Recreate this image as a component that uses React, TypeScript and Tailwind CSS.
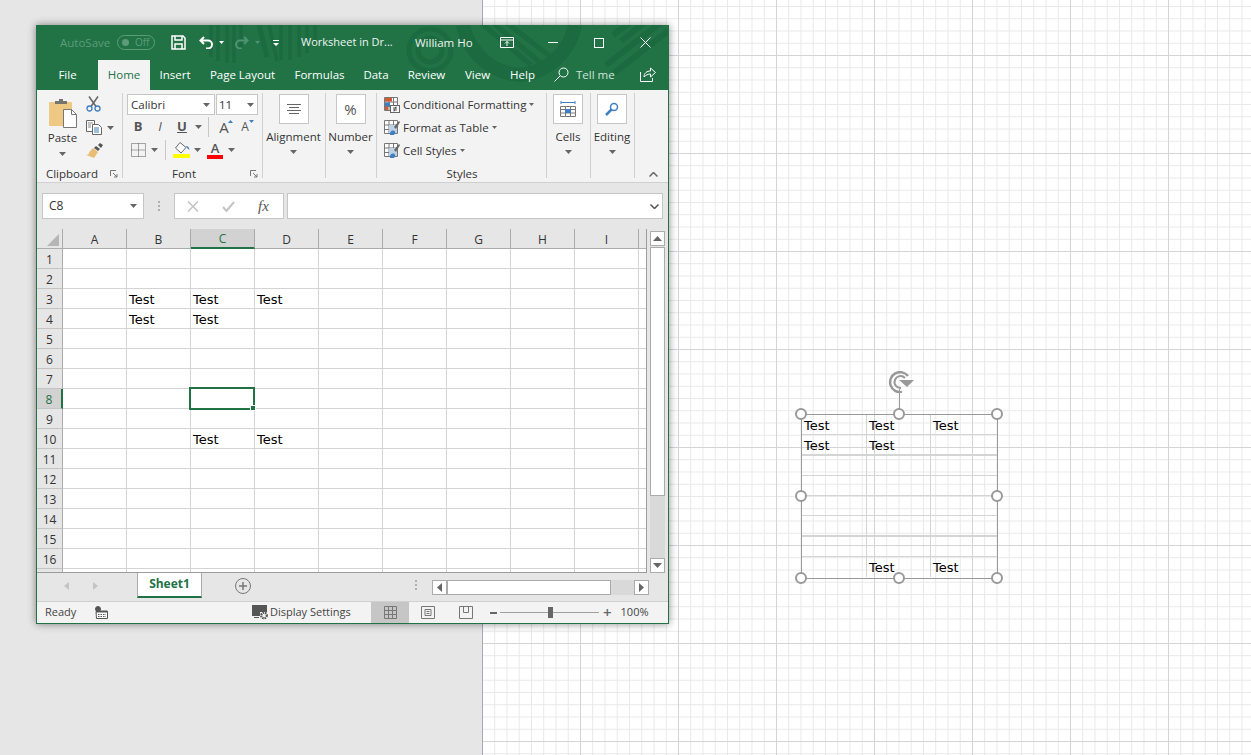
const uiFont = "font-['Open_Sans','Noto_Sans',sans-serif]";
const cellFont = "font-['DejaVu_Sans',sans-serif]";

const columns = ['A', 'B', 'C', 'D', 'E', 'F', 'G', 'H', 'I', ''];
const rows = Array.from({ length: 17 }, (_, i) => i + 1);
const values: Record<string, string> = {
  B3: 'Test',
  C3: 'Test',
  D3: 'Test',
  B4: 'Test',
  C4: 'Test',
  C10: 'Test',
  D10: 'Test',
};

const Caret = ({ className = '' }: { className?: string }) => (
  <svg width="7" height="4" viewBox="0 0 7 4" className={className}>
    <path d="M0 0h7L3.5 4z" fill="#666" />
  </svg>
);

const TitleArt = () => (
  <svg width="631" height="65" viewBox="0 0 631 65" className="absolute left-0 top-0" fill="none" stroke="#1c6a3f">
    <path d="M174 0v32M181 0v36M190 0v38M197 0v38M204 0v24M232 0l8 36M244 0v35M253 0v35M262 0v32M270 0v28M278 0v22" strokeWidth="3.5" />
    <path d="M222 0l8 32" strokeWidth="5" />
    <circle cx="393" cy="25" r="12" strokeWidth="5" />
    <circle cx="393" cy="25" r="21" strokeWidth="5" />
    <path d="M426 0a62 62 0 0 0 58 50a62 62 0 0 0 54-50" strokeWidth="14" />
    <path d="M444 -2l50 42M456 -2l50 42M470 -2l44 34" strokeWidth="5" />
    <path d="M631 6l-54 42M631 -8l-62 48M612 -6l-28 22M598 -6l-22 16" strokeWidth="6" />
  </svg>
);

const TitleBar = () => (
  <div className="relative z-10 flex h-[35px] items-center text-[11.5px] text-white">
    <span className="ml-[23px] w-[57px] text-[#5d9c79]">AutoSave</span>
    <span className="flex h-[15px] w-[38px] items-center rounded-full border border-[#5d9c79] pl-[4px] text-[10px] text-[#5d9c79]">
      <span className="mr-[6px] h-[7px] w-[7px] rounded-full bg-[#5d9c79]" />
      Off
    </span>
    <svg width="15" height="15" viewBox="0 0 15 15" className="ml-[16px]" fill="none" stroke="#fff">
      <path d="M1 1h11l2 2v11H1z" strokeWidth="1.5" />
      <path d="M4 1v4h7V1M4 14V9h7v5" strokeWidth="1.5" />
    </svg>
    <svg width="15" height="13" viewBox="0 0 15 13" className="ml-[13px]" fill="none" stroke="#fff" strokeWidth="2">
      <path d="M5 1L1.5 4.5 5 8M2 4.5h7a4 4 0 0 1 0 8H7" />
    </svg>
    <svg width="5" height="3" viewBox="0 0 5 3" className="ml-[5px]">
      <path d="M0 0h5L2.500 3z" fill="#fff" />
    </svg>
    <svg width="15" height="13" viewBox="0 0 15 13" className="ml-[10px]" fill="none" stroke="#4f9370" strokeWidth="2">
      <path d="M10 1l3.500 3.500L10 8M13 4.500H6a4 4 0 0 0 0 8h2" />
    </svg>
    <svg width="5" height="3" viewBox="0 0 5 3" className="ml-[6px]">
      <path d="M0 0h5L2.500 3z" fill="#4f9370" />
    </svg>
    <svg width="6" height="6" viewBox="0 0 6 6" className="ml-[13px]" fill="#fff">
      <path d="M0 0h6v1H0zM0 3h6L3 6z" />
    </svg>
    <span className="ml-[22px] w-[114px] text-[11px] text-[#eef5f1]">Worksheet in Dr...</span>
    <span className="w-[85px] text-[#eef5f1]">William Ho</span>
    <svg width="14" height="11" viewBox="0 0 14 11" fill="none" stroke="#fff">
      <path d="M.5.5h13v10H.5zM.5 3h13M7 9V4.500M5 6.500l2-2 2 2" />
    </svg>
    <span className="ml-[34px] h-px w-[10px] bg-white" />
    <span className="ml-[36px] h-[10px] w-[10px] border border-white" />
    <svg width="11" height="11" viewBox="0 0 11 11" className="ml-[36px]" stroke="#fff">
      <path d="M.5.5l10 10M10.500.5l-10 10" />
    </svg>
  </div>
);

const tabs = [
  { label: 'File', width: 'w-[61px]' },
  { label: 'Home', width: 'w-[52px]', active: true },
  { label: 'Insert', width: 'w-[50px]' },
  { label: 'Page Layout', width: 'w-[85px]' },
  { label: 'Formulas', width: 'w-[69px]' },
  { label: 'Data', width: 'w-[44px]' },
  { label: 'Review', width: 'w-[57px]' },
  { label: 'View', width: 'w-[45px]' },
  { label: 'Help', width: 'w-[45px]' },
];

const TabRow = () => (
  <div className="relative z-10 flex h-[30px] items-stretch text-[11.5px] text-white">
    {tabs.map((tab) => (
      <span
        key={tab.label}
        className={`flex items-center justify-center ${tab.width} ${tab.active ? 'bg-[#f3f3f3] text-[#217346]' : ''}`}
      >
        {tab.label}
      </span>
    ))}
    <svg width="15" height="15" viewBox="0 0 15 15" className="ml-[9px] mt-[7px]" fill="none" stroke="#fff">
      <circle cx="9.500" cy="5.500" r="4.500" />
      <path d="M6 9l-5.500 5.500" />
    </svg>
    <span className="ml-[7px] flex items-center text-[#cfe3d8]">Tell me</span>
    <svg width="16" height="15" viewBox="0 0 16 15" className="ml-[25px] mt-[7px]" fill="none" stroke="#fff">
      <path d="M.5 5v9.500h12V11M4 10c0-4 3-6 6.500-6V1l5 4.500-5 4.500V7C8 7 6 8 4 10z" />
    </svg>
  </div>
);

const Launcher = () => (
  <svg width="8" height="8" viewBox="0 0 8 8" fill="none" stroke="#777" className="block">
    <path d="M.5 6V.5H6M3 3l4 4M7 4v3H4" />
  </svg>
);

const Group = ({
  width,
  label,
  labelPad = '',
  launcher,
  children,
}: {
  width: string;
  label: string;
  labelPad?: string;
  launcher?: boolean;
  children: React.ReactNode;
}) => (
  <div className={`relative flex h-[91px] flex-col ${width}`}>
    <span className="absolute right-0 top-[3px] h-[85px] w-px bg-[#d0d0d0]" />
    <div className="h-[77px]">{children}</div>
    <div className={`relative flex h-[14px] items-center justify-center text-[11.5px] leading-none text-[#333] ${labelPad}`}>
      {label}
      {launcher && (
        <span className="absolute right-[5px] top-[3px]">
          <Launcher />
        </span>
      )}
    </div>
  </div>
);

const PasteIcon = () => (
  <svg width="30" height="30" viewBox="0 0 30 30">
    <rect x="1" y="4" width="23" height="24" rx="1" fill="#efc883" />
    <path d="M7 6V3h4V1h4v2h4v3z" fill="#77736d" />
    <path d="M15.500 11.500h8l5 5v13h-13z" fill="#fff" stroke="#777" />
    <path d="M23.500 11.500v5h5" fill="none" stroke="#777" />
  </svg>
);

const ScissorsIcon = () => (
  <svg width="15" height="16" viewBox="0 0 15 16" fill="none">
    <path d="M3 .5l7 10M12 .5l-7 10" stroke="#666" strokeWidth="1.500" />
    <circle cx="3.500" cy="12.500" r="2.500" stroke="#3f7fbf" strokeWidth="1.300" />
    <circle cx="11.500" cy="12.500" r="2.500" stroke="#3f7fbf" strokeWidth="1.300" />
  </svg>
);

const CopyIcon = () => (
  <svg width="16" height="15" viewBox="0 0 16 15" fill="#fff" stroke="#666">
    <path d="M.5.500h8v11h-8z" />
    <path d="M6.500 4.500h6l3 3v7h-9z" />
    <path d="M8 8h5M8 10h5M8 12h5" stroke="#3f7fbf" />
    <path d="M2 3h5M2 5h3M2 7h3" stroke="#888" />
  </svg>
);

const PainterIcon = () => (
  <svg width="17" height="15" viewBox="0 0 17 15">
    <path d="M10 3l4 3-2 2-4-3z" fill="#555" />
    <path d="M12 2l2-2 3 2-2 3z" fill="#555" />
    <path d="M7 5l5 4-4 6-8-3c2 0 3-1 3-2s2-3 4-5z" fill="#e9bd75" />
  </svg>
);

const FontIcons = () => (
  <div className="pl-[4px] pt-[4px]">
    <div className="flex h-[21px] items-stretch text-[11.5px] text-[#333]">
      <div className="mr-px flex w-[88px] items-center justify-between border border-[#c6c6c6] bg-white pl-[3px] pr-[4px]">
        Calibri
        <Caret />
      </div>
      <div className="flex w-[42px] items-center justify-between border border-[#c6c6c6] bg-white pl-[2px] pr-[3px]">
        11
        <Caret />
      </div>
    </div>
    <div className="mt-px flex h-[22px] items-center text-[#555]">
      <span className="ml-[5px] w-[12px] text-center text-[13px] font-bold">B</span>
      <span className="ml-[10px] w-[12px] text-center text-[13px] italic">I</span>
      <span className="ml-[10px] w-[12px] text-center text-[13px] font-bold underline">U</span>
      <Caret className="ml-[7px]" />
      <span className="ml-[6px] h-[20px] w-px bg-[#c8c8c8]" />
      <span className="relative ml-[8px] w-[14px] text-center text-[15px] leading-none">
        A
        <svg width="5" height="3" viewBox="0 0 5 3" className="absolute -right-[2px] top-0">
          <path d="M2.500 0L5 3H0z" fill="#3f7fbf" />
        </svg>
      </span>
      <span className="relative ml-[8px] w-[12px] text-center text-[12px] leading-none">
        A
        <svg width="5" height="3" viewBox="0 0 5 3" className="absolute -right-[3px] -top-[1px]">
          <path d="M0 0h5L2.500 3z" fill="#3f7fbf" />
        </svg>
      </span>
    </div>
    <div className="mt-[2px] flex h-[20px] items-center">
      <svg width="15" height="14" viewBox="0 0 15 14" className="ml-[4px]" fill="none" stroke="#555" strokeDasharray="1 1">
        <path d="M.5.500h14v13H.5zM.5 7h14M7.500.500v13" />
      </svg>
      <Caret className="ml-[5px]" />
      <span className="ml-[7px] h-[20px] w-px bg-[#c8c8c8]" />
      <span className="ml-[7px] flex w-[17px] flex-col items-center">
        <svg width="16" height="12" viewBox="0 0 16 12" fill="#fff" stroke="#666">
          <path d="M6 .5l6 5-5 5.500L1.500 6z" />
          <path d="M12 4c2 0 3 1 3.500 4L13 6z" fill="#3f7fbf" stroke="none" />
        </svg>
        <span className="h-[4px] w-[17px] bg-[#ffff00]" />
      </span>
      <Caret className="ml-[4px]" />
      <span className="ml-[6px] flex w-[16px] flex-col items-center text-[13px] font-semibold leading-[13px] text-[#555]">
        A
        <span className="h-[4px] w-[16px] bg-[#ff0000]" />
      </span>
      <Caret className="ml-[5px]" />
    </div>
  </div>
);

const BigButton = ({ label, children }: { label: string; children: React.ReactNode }) => (
  <div className="flex flex-col items-center pr-[2px] pt-[4px] text-[11.5px] text-[#333]">
    <span className="flex h-[30px] w-[30px] items-center justify-center border border-[#c6c6c6] bg-white">
      {children}
    </span>
    <span className="mt-[4px] whitespace-nowrap leading-[18px]">{label}</span>
    <Caret className="mt-[4px]" />
  </div>
);

const StyleIcon = ({ variant }: { variant: 'conditional' | 'table' }) => (
  <svg width="16" height="16" viewBox="0 0 16 16" fill="none">
    <path d="M.5.500h13v13H.5zM.5 5h13M.5 9.500h13M5 .500v13M9.500.500v13" stroke="#777" fill="#fff" />
    {variant === 'conditional' ? (
      <>
        <rect x="1" y="1" width="7" height="3.500" fill="#d25b34" />
        <rect x="1" y="5.500" width="5" height="3.500" fill="#3f7fbf" />
        <rect x="1" y="10" width="3" height="3" fill="#d25b34" />
        <rect x="6.500" y="8.500" width="9" height="7" fill="#fff" stroke="#666" />
        <path d="M9 11h4M9 13h4M10 14.500l2-5" stroke="#555" />
      </>
    ) : (
      <>
        <rect x="5" y="5" width="8" height="8" fill="#bcd0e6" />
        <path d="M10 7l5-6 1 1-4 7z" fill="#666" />
        <path d="M6 14c0-2 1-3.500 3-3.500s2.500 2 2 3l-1 1.500H6z" fill="#3f7fbf" />
      </>
    )}
  </svg>
);

const StyleRow = ({ variant, label }: { variant: 'conditional' | 'table'; label: string }) => (
  <div className="flex h-[23px] items-center text-[11.5px] text-[#333]">
    <StyleIcon variant={variant} />
    <span className="ml-[3px]">{label}</span>
    <svg width="5" height="3" viewBox="0 0 5 3" className="ml-[3px]">
      <path d="M0 0h5L2.500 3z" fill="#666" />
    </svg>
  </div>
);

const Ribbon = () => (
  <div className="flex h-[93px] border-b border-[#d0d0d0] bg-[#f3f3f3] pl-[1px]">
    <Group width="w-[85px]" label="Clipboard" labelPad="pr-[17px]" launcher>
      <div className="flex">
        <div className="flex w-[48px] flex-col items-center pl-px pt-[8px] text-[11.5px] text-[#333]">
          <PasteIcon />
          <span className="mt-[1px] leading-[18px]">Paste</span>
          <Caret className="mt-[5px]" />
        </div>
        <div className="flex flex-col pt-[6px]">
          <ScissorsIcon />
          <div className="mt-[8px] flex items-center">
            <CopyIcon />
            <Caret className="ml-[5px]" />
          </div>
          <div className="mt-[8px]">
            <PainterIcon />
          </div>
        </div>
      </div>
    </Group>
    <Group width="w-[140px]" label="Font" labelPad="pr-[18px]" launcher>
      <FontIcons />
    </Group>
    <Group width="w-[63px]" label="">
      <BigButton label="Alignment">
        <svg width="14" height="11" viewBox="0 0 14 11" stroke="#666">
          <path d="M0 .5h14M2 3.500h10M0 6.500h14M2 9.500h10" />
        </svg>
      </BigButton>
    </Group>
    <Group width="w-[51px]" label="">
      <BigButton label="Number">
        <span className="text-[15px] text-[#555]">%</span>
      </BigButton>
    </Group>
    <Group width="w-[170px]" label="Styles">
      <div className="pl-[7px] pt-[3px]">
        <StyleRow variant="conditional" label="Conditional Formatting" />
        <StyleRow variant="table" label="Format as Table" />
        <StyleRow variant="table" label="Cell Styles" />
      </div>
    </Group>
    <Group width="w-[44px]" label="">
      <BigButton label="Cells">
        <svg width="16" height="17" viewBox="0 0 16 17" fill="none">
          <path d="M1 1.500h14M1 0v3M15 0v3" stroke="#3f7fbf" />
          <path d="M.5 5.500h15v10H.5zM.5 8.500h15M.5 12h15M5.500 5.500v10M10.500 5.500v10" stroke="#777" />
          <rect x="5" y="8" width="6" height="4" fill="#3f7fbf" />
        </svg>
      </BigButton>
    </Group>
    <Group width="w-[44px]" label="">
      <BigButton label="Editing">
        <svg width="14" height="14" viewBox="0 0 14 14" fill="none" stroke="#3f7fbf">
          <circle cx="9" cy="5" r="3.500" strokeWidth="1.500" />
          <path d="M6.500 7.500L1 13" strokeWidth="2.500" />
        </svg>
      </BigButton>
    </Group>
    <div className="flex flex-1 items-end justify-end pb-[5px] pr-[10px]">
      <svg width="9" height="5" viewBox="0 0 9 5" fill="none" stroke="#666" strokeWidth="1.500">
        <path d="M.5 4.500l4-4 4 4" />
      </svg>
    </div>
  </div>
);

const FormulaBar = () => (
  <div className="flex h-[46px] items-start bg-[#e6e6e6] pl-[5px] pt-[10px]">
    <div className="flex h-[26px] w-[102px] items-center justify-between border border-[#c6c6c6] bg-white pl-[6px] pr-[6px] text-xs text-[#333]">
      C8
      <Caret />
    </div>
    <span className="ml-[13px] mt-[8px] flex w-[4px] flex-col items-center gap-[2px]">
      <i className="h-[2px] w-[2px] bg-[#b0b0b0]" />
      <i className="h-[2px] w-[2px] bg-[#b0b0b0]" />
      <i className="h-[2px] w-[2px] bg-[#b0b0b0]" />
    </span>
    <div className="ml-[13px] flex h-[26px] w-[110px] items-center border border-[#c6c6c6] bg-white">
      <svg width="12" height="11" viewBox="0 0 12 11" className="ml-[12px]" stroke="#c4c4c4" strokeWidth="1.500">
        <path d="M1 .5l10 10M11 .5l-10 10" />
      </svg>
      <svg width="13" height="11" viewBox="0 0 13 11" className="ml-[23px]" fill="none" stroke="#c4c4c4" strokeWidth="2">
        <path d="M1 6l3.500 4L12 1" />
      </svg>
      <span className="ml-[23px] font-['Liberation_Serif',serif] text-[15px] italic text-[#555]">fx</span>
    </div>
    <div className="ml-[3px] flex h-[26px] w-[376px] items-center justify-end border border-[#c6c6c6] bg-white pr-[3px]">
      <svg width="9" height="5" viewBox="0 0 9 5" fill="none" stroke="#555" strokeWidth="1.500">
        <path d="M.5.500l4 4 4-4" />
      </svg>
    </div>
  </div>
);

const SheetGrid = () => (
  <div className={`relative h-[344px] w-[610px] overflow-hidden border-b border-r border-[#9c9c9c] bg-white ${uiFont}`}>
    <div className="grid grid-cols-[26px_repeat(10,64px)] grid-rows-[20px_repeat(17,20px)]">
      <div className="relative border-b border-r border-[#ababab] bg-[#e6e6e6]">
        <svg width="12" height="12" viewBox="0 0 12 12" className="absolute bottom-[2px] right-[3px]">
          <path d="M12 0v12H0z" fill="#b5b5b5" />
        </svg>
      </div>
      {columns.map((col) => (
        <div
          key={col || 'J'}
          className={`flex items-center justify-center border-r border-[#ababab] pt-[2px] text-xs ${
            col === 'C'
              ? 'border-b-2 border-b-[#217346] bg-[#d2d2d2] text-[#217346]'
              : 'border-b border-b-[#ababab] bg-[#e6e6e6] text-[#333]'
          }`}
        >
          {col}
        </div>
      ))}
      {rows.map((row) => (
        <div key={row} className="contents">
          <div
            className={`flex items-center justify-center border-b border-[#c4c4c4] pt-[2px] text-xs ${
              row === 8
                ? 'border-r-2 border-r-[#217346] bg-[#d2d2d2] text-[#217346]'
                : 'border-r border-r-[#ababab] bg-[#e6e6e6] text-[#333]'
            }`}
          >
            {/* row 17 only shows its top edge, no number visible */}
            {row < 17 ? row : ''}
          </div>
          {columns.map((col) => (
            <div
              key={col || 'J'}
              className={`flex items-center overflow-hidden border-b border-r border-[#d4d4d4] pl-[2px] pt-[2px] text-[13px] text-black ${cellFont}`}
            >
              {values[`${col}${row}`]}
            </div>
          ))}
        </div>
      ))}
    </div>
    {/* active cell C8 */}
    <div className="absolute left-[152px] top-[158px] h-[23px] w-[66px] border-2 border-[#217346]">
      <span className="absolute -bottom-[3px] -right-[3px] h-[6px] w-[6px] border border-white bg-[#217346]" />
    </div>
  </div>
);

const ScrollButton = ({ dir }: { dir: 'up' | 'down' | 'left' | 'right' }) => (
  <span className="flex h-[15px] w-[15px] shrink-0 items-center justify-center border border-[#ababab] bg-white">
    <svg width="9" height="9" viewBox="0 0 9 9" fill="#666">
      {dir === 'up' && <path d="M4.500 2L9 7H0z" />}
      {dir === 'down' && <path d="M0 2h9L4.500 7z" />}
      {dir === 'left' && <path d="M7 0v9L2 4.500z" />}
      {dir === 'right' && <path d="M2 0v9l5-4.500z" />}
    </svg>
  </span>
);

const VerticalScroll = () => (
  <div className="flex flex-1 flex-col bg-[#e6e6e6] pl-[3px] pr-[3px] pt-[2px]">
    <ScrollButton dir="up" />
    <div className="mt-px flex w-[15px] flex-1 flex-col bg-[#d9d9d9]">
      <div className="h-[249px] border border-[#ababab] bg-white" />
    </div>
    <ScrollButton dir="down" />
  </div>
);

const SheetTabs = () => (
  <div className="flex h-[28px] items-start bg-[#e6e6e6] text-xs">
    <svg width="5" height="8" viewBox="0 0 5 8" className="ml-[27px] mt-[9px]" fill="#c4c4c4">
      <path d="M5 0v8L0 4z" />
    </svg>
    <svg width="5" height="8" viewBox="0 0 5 8" className="ml-[24px] mt-[9px]" fill="#c4c4c4">
      <path d="M0 0v8l5-4z" />
    </svg>
    <div className="-mt-px ml-[39px] flex h-[26px] w-[65px] items-center justify-center border-x border-b-2 border-x-[#ababab] border-b-[#217346] bg-white font-bold text-[#217346]">
      Sheet1
    </div>
    <svg width="16" height="16" viewBox="0 0 16 16" className="ml-[33px] mt-[5px]" fill="none" stroke="#777">
      <circle cx="8" cy="8" r="7.500" />
      <path d="M8 4v8M4 8h8" strokeWidth="1.500" />
    </svg>
    <span className="ml-[164px] mt-[7px] flex w-[2px] flex-col gap-[2px]">
      <i className="h-[2px] w-[2px] bg-[#b0b0b0]" />
      <i className="h-[2px] w-[2px] bg-[#b0b0b0]" />
      <i className="h-[2px] w-[2px] bg-[#b0b0b0]" />
    </span>
    <div className="ml-[15px] mt-[7px] flex w-[217px] bg-[#d9d9d9]">
      <ScrollButton dir="left" />
      <span className="h-[15px] w-[164px] border border-[#ababab] bg-white" />
      <span className="flex-1" />
      <ScrollButton dir="right" />
    </div>
  </div>
);

const StatusBar = () => (
  <div className="flex h-[22px] items-center border-t border-[#d0d0d0] bg-[#f3f3f3] text-[11px] text-[#444]">
    <span className="ml-[8px] w-[50px]">Ready</span>
    <svg width="13" height="13" viewBox="0 0 13 13" fill="none" stroke="#555">
      <circle cx="3" cy="3" r="2.500" fill="#555" />
      <path d="M1 5.500h11.500v7H1.500z" fill="#fff" />
      <path d="M1 5.500h11.500" strokeWidth="2" />
      <path d="M3 8.500h8M3 10.500h8" strokeDasharray="1.500 1" />
    </svg>
    <svg width="17" height="15" viewBox="0 0 17 15" className="ml-[144px]" fill="#555">
      <path d="M0 0h15v7H8v4H0zM2 12h5v1H2z" />
      <circle cx="12" cy="10.500" r="2.800" fill="none" stroke="#555" strokeWidth="2.200" strokeDasharray="1.500 .8" />
    </svg>
    <span className="ml-[1px] w-[101px]">Display Settings</span>
    <span className="flex h-full w-[38px] items-center justify-center bg-[#c6c6c6]">
      <svg width="13" height="13" viewBox="0 0 13 13" fill="none" stroke="#777">
        <path d="M.5.500h12v12H.5zM.5 4.500h12M.5 8.500h12M4.500.500v12M8.500.500v12" />
      </svg>
    </span>
    <svg width="14" height="13" viewBox="0 0 14 13" className="ml-[12px]" fill="none" stroke="#777">
      <path d="M.5.500h13v12H.5zM4 3.500h6v6H4zM5.500 5.500h3M5.500 7.500h3" />
    </svg>
    <svg width="14" height="13" viewBox="0 0 14 13" className="ml-[24px]" fill="none" stroke="#777">
      <path d="M.5.500h13v12H.5zM4.500.500v6h5V.500" />
    </svg>
    <span className="ml-[17px] h-[2px] w-[7px] bg-[#666]" />
    <span className="relative ml-[3px] h-px w-[99px] bg-[#a0a0a0]">
      <span className="absolute left-[48px] -top-[5px] h-[11px] w-[5px] bg-[#666]" />
    </span>
    <span className="ml-[4px] text-[15px] font-semibold leading-none text-[#666]">+</span>
    <span className="ml-[9px]">100%</span>
  </div>
);

const ExcelWindow = () => (
  <div className={`absolute left-[36px] top-[25px] flex h-[599px] w-[633px] flex-col border-x border-b border-[#217346] bg-[#e6e6e6] shadow-[0_0_8px_rgba(0,0,0,0.45)] ${uiFont}`}>
    <div className="relative bg-[#217346]">
      <TitleArt />
      <TitleBar />
      <TabRow />
    </div>
    <Ribbon />
    <FormulaBar />
    <div className="flex">
      <SheetGrid />
      <VerticalScroll />
    </div>
    <SheetTabs />
    <StatusBar />
  </div>
);

const tableRows = [
  ['Test', 'Test', 'Test'],
  ['Test', 'Test', ''],
  ['', '', ''],
  ['', '', ''],
  ['', '', ''],
  ['', '', ''],
  ['', '', ''],
  ['', 'Test', 'Test'],
];

// handles sit on the frame corners and edge middles
const handles = [
  'left-[-7px] top-[-7px]',
  'left-[91px] top-[-7px]',
  'left-[189px] top-[-7px]',
  'left-[-7px] top-[75px]',
  'left-[189px] top-[75px]',
  'left-[-7px] top-[157px]',
  'left-[91px] top-[157px]',
  'left-[189px] top-[157px]',
];

const EmbeddedTable = () => (
  <div className={`absolute left-[801px] top-[414px] h-[165px] w-[197px] border border-[#999] ${cellFont}`}>
    <div className="grid h-[162px] grid-cols-[65px_64px_66px] grid-rows-[repeat(8,20.3px)]">
      {tableRows.map((row, r) =>
        row.map((text, c) => (
          <div
            key={`${r}-${c}`}
            className={`flex items-center pl-[2px] text-[13px] text-black ${r === 7 ? 'pt-px' : 'pt-[2px]'} ${c < 2 ? 'border-r border-r-[#d4d4d4]' : ''} ${
              r === 7 ? '' : r === 1 || r === 5 ? 'border-b-2 border-b-[#d4d4d4]' : 'border-b border-b-[#d4d4d4]'
            }`}
          >
            {text}
          </div>
        )),
      )}
    </div>
    <span className="absolute left-[97px] top-[-26px] h-[26px] w-px bg-[#999]" />
    <svg width="26" height="22" viewBox="0 0 26 22" className="absolute left-[86px] top-[-44px]" fill="none" stroke="#999">
      <path d="M20 5a10 10 0 1 0-6 16" strokeWidth="2.500" />
      <path d="M17 7a6 6 0 1 0-4 10" strokeWidth="2" />
      <path d="M11 9h15l-7 7z" fill="#999" stroke="none" />
    </svg>
    {handles.map((pos) => (
      <span key={pos} className={`absolute h-[12px] w-[12px] rounded-full border-2 border-[#999] bg-white ${pos}`} />
    ))}
  </div>
);

export default function App() {
  return (
    <div className="relative flex h-[755px] w-[1251px] overflow-hidden bg-white">
      <div className="h-full w-[483px] border-r border-[#a9a9b2] bg-[#e6e6e6]" />
      <div className="h-full flex-1 bg-[linear-gradient(to_right,#d4d4d8_1px,transparent_1px),linear-gradient(to_bottom,#d4d4d8_1px,transparent_1px),linear-gradient(to_right,#e8e8e8_1px,transparent_1px),linear-gradient(to_bottom,#e8e8e8_1px,transparent_1px)] bg-[size:98px_98px,98px_98px,12.25px_12.25px,12.25px_12.25px] bg-[position:97px_55px,97px_55px,11.25px_6px,11.25px_6px]" />
      <ExcelWindow />
      <EmbeddedTable />
    </div>
  );
}
